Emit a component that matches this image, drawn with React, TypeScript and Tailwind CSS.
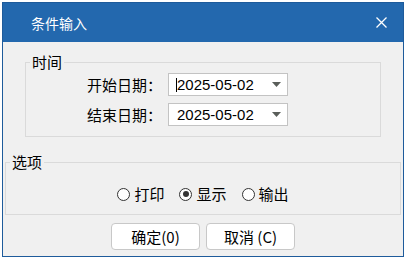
import React, { useState } from "react";

const cjk = "font-['Microsoft_YaHei','Noto_Sans_CJK_SC',sans-serif]";

const DateBox = ({ value, focused }: { value: string; focused?: boolean }) => {
  return (
    <div className="w-[120px] h-[23px] bg-white border border-[#c3c3c3] flex items-center pr-[6px]">
      {focused ? (
        <>
          <span className="ml-[7px] w-px h-[14px] bg-black" />
          <span className="text-[15px] leading-none font-['Liberation_Sans',sans-serif] text-black">
            {value}
          </span>
        </>
      ) : (
        <span className="ml-[8px] text-[15px] leading-none font-['Liberation_Sans',sans-serif] text-black">
          {value}
        </span>
      )}
      <svg className="ml-auto" width="9" height="5" viewBox="0 0 9 5">
        <polygon points="0,0 9,0 4.5,5" fill="#5a5e5a" />
      </svg>
    </div>
  );
};

const Radio = ({
  label,
  checked,
  onClick,
}: {
  label: string;
  checked: boolean;
  onClick: () => void;
}) => {
  return (
    <div className="flex items-center gap-[4px] cursor-default" onClick={onClick}>
      <span className="w-[13px] h-[13px] rounded-full border border-[#333] bg-white flex items-center justify-center">
        {checked && <span className="w-[6px] h-[6px] rounded-full bg-[#333]" />}
      </span>
      <span className="text-[15px] leading-[20px]">{label}</span>
    </div>
  );
};

const App = () => {
  const [mode, setMode] = useState("显示");

  return (
    <div className={`w-[407px] h-[259px] bg-white p-[2px] text-black ${cjk}`}>
      <div className="w-[402px] h-[255px] border border-[#1e5b9b] bg-[#f0f0f0] flex flex-col">
        <div className="h-[39px] bg-[#2368ae] flex items-center justify-between pl-[28px] pr-[16px]">
          <span className="text-white text-[14px] leading-none">条件输入</span>
          <svg width="11" height="11" viewBox="0 0 11 11">
            <path d="M0.5 0.5 L10.5 10.5 M10.5 0.5 L0.5 10.5" stroke="white" strokeWidth="1.3" />
          </svg>
        </div>

        <fieldset className="mt-[10px] ml-[22px] w-[356px] border border-[#dadada] pt-[1px] pb-[10px] flex flex-col gap-[7px]">
          <legend className="ml-[4px] px-[2px] text-[15px] leading-[20px]">时间</legend>
          <div className="flex items-center pl-[61px]">
            <span className="w-[81px] text-[15px] leading-[20px]">开始日期：</span>
            <DateBox value="2025-05-02" focused />
          </div>
          <div className="flex items-center pl-[61px]">
            <span className="w-[81px] text-[15px] leading-[20px]">结束日期：</span>
            <DateBox value="2025-05-02" />
          </div>
        </fieldset>

        <fieldset className="mt-[15px] ml-[2px] w-[396px] border border-[#dadada] pt-[12px] pb-[10px]">
          <legend className="ml-[4px] px-[2px] text-[15px] leading-[20px]">选项</legend>
          <div className="flex justify-center gap-[15px]">
            {["打印", "显示", "输出"].map((m) => (
              <Radio key={m} label={m} checked={mode === m} onClick={() => setMode(m)} />
            ))}
          </div>
        </fieldset>

        <div className="mt-[8px] flex justify-center gap-[6px]">
          <button className="w-[89px] h-[27px] bg-white border border-[#c8c8c8] rounded-[4px] text-[15px] leading-none">
            确定(0)
          </button>
          <button className="w-[89px] h-[27px] bg-white border border-[#c8c8c8] rounded-[4px] text-[15px] leading-none">
            取消 (C)
          </button>
        </div>
      </div>
    </div>
  );
};

export default App;
